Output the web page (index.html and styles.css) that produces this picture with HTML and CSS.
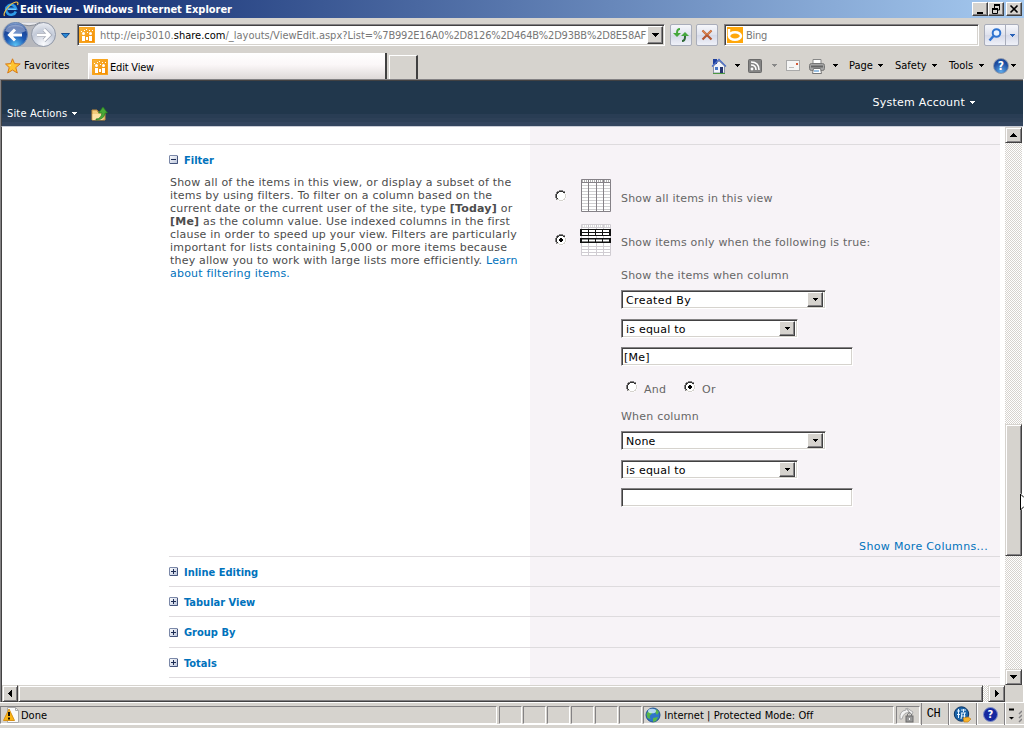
FILE: index.html
```html
<!DOCTYPE html>
<html lang="en">
<head>
<meta charset="utf-8">
<title>Edit View - Windows Internet Explorer</title>
<link rel="stylesheet" href="styles.css">
</head>
<body>
<svg width="0" height="0" class="defs">
  <defs>
    <linearGradient id="orange" x1="0" y1="0" x2="1" y2="1"><stop offset="0" stop-color="#f9b73a"/><stop offset="1" stop-color="#f48a00"/></linearGradient>
    <radialGradient id="blueball" cx=".5" cy=".95" r=".95"><stop offset="0" stop-color="#59c5f5"/><stop offset=".45" stop-color="#1c58b4"/><stop offset=".8" stop-color="#1d4292"/><stop offset="1" stop-color="#9ab4dc"/></radialGradient>
    <radialGradient id="greyball" cx=".5" cy=".9" r=".9"><stop offset="0" stop-color="#fafbfe"/><stop offset=".6" stop-color="#c3cad8"/><stop offset="1" stop-color="#eceef3"/></radialGradient>
    <linearGradient id="box" x1="0" y1="0" x2="1" y2="1"><stop offset="0" stop-color="#fff"/><stop offset="1" stop-color="#b9c3da"/></linearGradient>
    <symbol id="site" viewBox="0 0 16 16">
      <rect width="16" height="16" rx="1" fill="url(#orange)"/>
      <path d="M.5.5h15v15H.5z" fill="none" stroke="#f8a51e"/>
      <g fill="#fff"><circle cx="4.500" cy="6.500" r="1.500"/><circle cx="11.500" cy="6.500" r="1.500"/><path d="M3 9h3v5H3zM10 9h3v5h-3zM7 10h2v3H7zM7 2h1v1H7zM10 3h1v1h-1zM5 3h1v1H5zM13 3h1v1h-1zM8 5h1v1H8zM2 4h1v1H2z"/></g>
    </symbol>
    <symbol id="plus" viewBox="0 0 9 9"><rect x=".5" y=".5" width="8" height="8" rx=".5" fill="url(#box)" stroke="#7b88a8"/><path d="M8.500 1v7.500H1" fill="none" stroke="#44547c"/><path d="M2 4.500h5M4.500 2v5" stroke="#1c2c54"/></symbol>
    <symbol id="minus" viewBox="0 0 9 9"><rect x=".5" y=".5" width="8" height="8" rx=".5" fill="url(#box)" stroke="#7b88a8"/><path d="M8.500 1v7.500H1" fill="none" stroke="#44547c"/><path d="M2 4.500h5" stroke="#1c2c54"/></symbol>
    <symbol id="down" viewBox="0 0 7 4"><path d="M0 0h7v1H6v1H5v1H4v1H3V3H2V2H1V1H0z" fill="currentColor"/></symbol>
    <symbol id="down5" viewBox="0 0 5 3"><path d="M0 0h5v1H4v1H3v1H2V2H1V1H0z" fill="currentColor"/></symbol>
    <symbol id="radio" viewBox="0 0 12 12"><circle cx="6" cy="6" r="5.500" fill="#fff"/><path d="M4 0h4v1H4zM2 1h2v1H2zM8 1h2v1H8zM1 2h1v2H1zM0 4h1v4H0zM1 8h1v2H1z" fill="#848284"/><path d="M4 1h4v1H4zM2 2h2v1H2zM8 2h2v1H8zM2 3h1v1H2zM1 4h1v4H1zM2 8h1v1H2z" fill="#303030"/><path d="M9 3h1v1H9zM10 4h1v4h-1zM9 8h1v1H9zM8 9h2v1H8zM4 10h4v1H4zM2 9h2v1H2z" fill="#d6d3ce"/></symbol>
    <symbol id="radio-on" viewBox="0 0 12 12"><use href="#radio" width="12" height="12"/><path d="M5 4h2v1h1v2H7v1H5V7H4V5h1z" fill="#000"/></symbol>
  </defs>
</svg>

<div class="window">
  <header class="titlebar">
    <svg class="ie" width="16" height="16" viewBox="0 0 16 16"><path d="M12.800 10.500A5 5 0 1 1 13 7.800H5" fill="none" stroke="#2e9be8" stroke-width="2.600"/><path d="M4.500 8.300h8.500" stroke="#8fd4fb"/><path d="M1.500 15C-.5 12 7 2 13 1c2-.2 2.300 1 1.500 3" fill="none" stroke="#f4c33f" stroke-width="1.200"/></svg>
    <span class="caption">Edit View - Windows Internet Explorer</span>
    <div class="winbtns">
      <span class="wb"><svg width="12" height="10"><path d="M3 9h6" stroke="#000" stroke-width="2"/></svg></span>
      <span class="wb"><svg width="12" height="10"><path d="M4.500 4V1M9.500 1v5H8" fill="none" stroke="#000"/><path d="M4 1h6" stroke="#000" stroke-width="2"/><path d="M2.500 5v4.500h5V5" fill="none" stroke="#000"/><path d="M2 5h6" stroke="#000" stroke-width="2"/></svg></span>
      <span class="wb close"><svg width="12" height="10"><path d="M2.500 1.500l7 7M9.500 1.500l-7 7" stroke="#000" stroke-width="1.600"/></svg></span>
    </div>
  </header>

  <div class="navbar">
    <svg class="backfwd" width="72" height="32" viewBox="0 0 72 32">
      <rect x="2" y="4" width="53" height="25" rx="12.500" fill="#b7b8bd"/>
      <path d="M18 4.500Q29 11 40 4.500" fill="#e8e8ec" stroke="#888d96"/>
      <circle cx="15.500" cy="16.500" r="12" fill="url(#blueball)" stroke="#6685b4"/>
      <path d="M5 13a11 9 0 0 1 21 0q-10 5-21 0z" fill="#fff" opacity=".38"/>
      <path d="M22 17H10M15 11.500L9.500 17l5.500 5.500" fill="none" stroke="#fff" stroke-width="3"/>
      <circle cx="43.500" cy="16.500" r="12" fill="url(#greyball)" stroke="#9198a6"/>
      <path d="M37 17h12M44 11.500l5.500 5.500-5.500 5.500" fill="none" stroke="#a4a9b5" stroke-width="4"/>
      <path d="M37 17h12M44 11.500l5.500 5.500-5.500 5.500" fill="none" stroke="#fff" stroke-width="2.500"/>
      <path d="M61.500 15.500h8L65.500 20z" fill="#2a8ad6" stroke="#174e91"/>
    </svg>
    <div class="field address">
      <svg width="16" height="16"><use href="#site"/></svg>
      <span class="url">http://eip3010.<b>share.com</b>/_layouts/ViewEdit.aspx?List=<span class="guid">%7B992E16A0%2D8126%2D464B%2D93BB%2D8E58AF</span></span>
      <span class="drop"><svg width="7" height="4"><use href="#down"/></svg></span>
    </div>
    <span class="soft refresh"><svg width="16" height="14" viewBox="0 0 16 14"><path d="M7 1Q4 1 4 5v2" fill="none" stroke="#45a83d" stroke-width="2"/><path d="M0 5h8L4 9z" fill="#45a83d"/><path d="M9 13q3 0 3-4V7" fill="none" stroke="#2f6936" stroke-width="2"/><path d="M8 8h8l-4-4z" fill="#45a83d"/></svg></span>
    <span class="soft stop"><svg width="12" height="12"><path d="M1.500 1.500l9 9M10.500 1.500l-9 9" stroke="#b4552f" stroke-width="2.200"/><path d="M1.500 1.500l4 4M10.500 1.500l-4 4" stroke="#dc8a54" stroke-width="1.500"/></svg></span>
    <div class="field search">
      <svg width="16" height="16"><rect width="16" height="16" fill="#ffa70a"/><path d="M2 2v7" stroke="#fff" stroke-width="2.500"/><ellipse cx="8" cy="9" rx="6" ry="3.700" fill="none" stroke="#fff" stroke-width="2.500"/></svg>
      <span>Bing</span>
    </div>
    <div class="soft go">
      <svg width="14" height="14"><circle cx="8.500" cy="5" r="3.800" fill="#e9f3ff" stroke="#2f74d0" stroke-width="2"/><path d="M5.500 8l-4 4.500" stroke="#2f74d0" stroke-width="2.500"/></svg>
      <span class="godrop"><svg width="5" height="3"><use href="#down5"/></svg></span>
    </div>
  </div>

  <div class="tabbar">
    <div class="favs">
      <svg width="16" height="16" viewBox="0 0 16 16"><path d="M7.500.8l2 4.800 5.700.3-4.400 3.700 1.500 5.400-4.800-3L2.700 15l1.500-5.400L.5 6l5.200-.4z" fill="#ffc52e" stroke="#d77a18"/><path d="M7.300 3l-1 3.500-3.500.4 3 1z" fill="#fff0a0"/></svg>
      <span>Favorites</span>
    </div>
    <div class="tab"><svg width="16" height="16"><use href="#site"/></svg><span>Edit View</span></div>
    <div class="newtab"></div>
    <nav class="commands">
      <svg width="16" height="16" viewBox="0 0 16 16" class="c-home"><path d="M2.500 8v7h11V8L8 3z" fill="#f2f4fa" stroke="#8b94a6"/><path d="M2 1h4v5H2z" fill="#1e3f9c"/><path d="M1 8.500L8 1.500l7 7" fill="none" stroke="#4a6bc4" stroke-width="1.300"/><path d="M2 15.500h12" stroke="#4d9a42"/><path d="M9 9h3v6H9z" fill="#27356e"/><path d="M4 9h3v3H4z" fill="#4877c7"/></svg>
      <svg width="5" height="3" class="a-home"><use href="#down5"/></svg>
      <svg width="14" height="14" class="c-feed"><rect x=".5" y=".5" width="13" height="13" rx="1" fill="#858585" stroke="#6a6a6a"/><path d="M3 6q5 0 5 5M3 3q8 0 8 8" fill="none" stroke="#fff" stroke-width="1.600"/><circle cx="4" cy="10" r="1.400" fill="#fff"/></svg>
      <svg width="5" height="3" class="a-feed"><use href="#down5"/></svg>
      <svg width="14" height="11" class="c-mail"><rect x=".5" y=".5" width="13" height="10" fill="#f5f5f5" stroke="#a9a9a9"/><path d="M10 3h2v2h-2z" fill="#d45a39"/><path d="M3 7.500h5" stroke="#bbb"/></svg>
      <svg width="16" height="16" viewBox="0 0 16 16" class="c-print"><path d="M4 1.500h8V7H4z" fill="#fff" stroke="#878787"/><rect x=".5" y="5.500" width="15" height="7" rx="2" fill="#a5a5a5" stroke="#777"/><path d="M2 8.500h12" stroke="#666" stroke-width="2"/><path d="M4.500 10.500h7l1 5h-9z" fill="#fff" stroke="#777"/><path d="M5 13h5" stroke="#3984c9"/></svg>
      <svg width="5" height="3" class="a-print"><use href="#down5"/></svg>
      <span class="cmd page-cmd">Page</span><svg width="5" height="3"><use href="#down5"/></svg>
      <span class="cmd safety">Safety</span><svg width="5" height="3"><use href="#down5"/></svg>
      <span class="cmd tools">Tools</span><svg width="5" height="3"><use href="#down5"/></svg>
      <span class="help">?</span><svg width="5" height="3" class="a-help"><use href="#down5"/></svg>
    </nav>
  </div>

  <div class="client">
    <div class="ribbon">
      <div class="siteactions"><span>Site Actions</span><svg width="5" height="3"><use href="#down5"/></svg>
        <svg class="upfolder" width="17" height="16" viewBox="0 0 17 16"><path d="M1 4h5l1 2h7v8H1z" fill="#f3cb7c" stroke="#c48e3c"/><path d="M1.500 8h11l-1 6h-10z" fill="#ffe2a4"/><path d="M5 13q5 0 6-6H7.500L12 1l4.500 6H14q-1 7-9 7z" fill="#49a936" stroke="#267a22" stroke-width=".7"/></svg>
      </div>
      <div class="account"><span>System Account</span><svg width="5" height="3"><use href="#down5"/></svg></div>
    </div>

    <div class="viewport">
      <main class="page">
        <div class="row lead"><div></div><div class="pane"></div></div>
        <section class="row filter">
          <div class="desc">
            <h3><svg width="9" height="9"><use href="#minus"/></svg><span>Filter</span></h3>
            <p>Show all of the items in this view, or display a subset of the<br>items by using filters. To filter on a column based on the<br>current date or the current user of the site, type <b>[Today]</b> or<br><b>[Me]</b> as the column value. Use indexed columns in the first<br>clause in order to speed up your view. Filters are particularly<br>important for lists containing 5,000 or more items because<br>they allow you to work with large lists more efficiently. <a>Learn<br>about filtering items.</a></p>
          </div>
          <div class="pane form">
            <div class="choice all">
              <svg class="rd" width="12" height="12"><use href="#radio"/></svg>
              <svg class="grid" width="32" height="34" viewBox="0 0 32 34"><path d="M1.500.5h29v32h-29z" fill="#fff"/><path d="M2 6.500h28M2 9.500h28M2 12.500h28M2 15.500h28M2 18.500h28M2 21.500h28M2 24.500h28M2 27.500h28M2 30.500h28" stroke="#d0d0d2"/><path d="M2 2h28" stroke="#b5b5b5" stroke-width="2" stroke-dasharray="1 1"/><path d="M1.500.5h29v32h-29zM1.500 3.500h29M8.500 1v32M16.500 1v32M23.500 1v32" fill="none" stroke="#858187"/></svg>
              <span>Show all items in this view</span>
            </div>
            <div class="choice only">
              <svg class="rd" width="12" height="12"><use href="#radio-on"/></svg>
              <svg class="grid second" width="32" height="34" viewBox="0 0 32 34"><path d="M1.500.5h29v31h-29z" fill="#fff"/><path d="M1.500 3.500h29M1.500 22.500h29M1.500 25.500h29M1.500 28.500h29M8.500 1v31M16.500 1v31M23.500 1v31M1.500.5h29v31h-29z" fill="none" stroke="#d0ccd2"/><path d="M2 2h28" stroke="#bbb" stroke-dasharray="1 1"/><path d="M0 5h31v7H0zM0 14h31v5H0z" fill="#111"/><path d="M2 6h6v2H2zM9 6h6v2H9zM16 6h6v2h-6zM23 6h6v2h-6zM2 9h6v2H2zM9 9h6v2H9zM16 9h6v2h-6zM23 9h6v2h-6zM2 15.500h6v2H2zM9 15.500h6v2H9zM16 15.500h6v2h-6zM23 15.500h6v2h-6z" fill="#fff"/></svg>
              <span>Show items only when the following is true:</span>
            </div>
            <div class="conditions">
              <label class="l1">Show the items when column</label>
              <div class="select wide"><span class="who">Created By</span><i><svg width="5" height="3"><use href="#down5"/></svg></i></div>
              <div class="select narrow"><span>is equal to</span><i><svg width="5" height="3"><use href="#down5"/></svg></i></div>
              <div class="input">[Me]</div>
              <div class="andor">
                <svg width="12" height="12"><use href="#radio"/></svg><span>And</span>
                <svg class="or" width="12" height="12"><use href="#radio-on"/></svg><span>Or</span>
              </div>
              <label class="l2">When column</label>
              <div class="select wide"><span>None</span><i><svg width="5" height="3"><use href="#down5"/></svg></i></div>
              <div class="select narrow"><span>is equal to</span><i><svg width="5" height="3"><use href="#down5"/></svg></i></div>
              <div class="input"></div>
            </div>
            <a class="more">Show More Columns...</a>
          </div>
        </section>
        <section class="row s30"><div><h3><svg width="9" height="9"><use href="#plus"/></svg><span>Inline Editing</span></h3></div><div class="pane"></div></section>
        <section class="row s30"><div><h3><svg width="9" height="9"><use href="#plus"/></svg><span>Tabular View</span></h3></div><div class="pane"></div></section>
        <section class="row s31"><div><h3><svg width="9" height="9"><use href="#plus"/></svg><span>Group By</span></h3></div><div class="pane"></div></section>
        <section class="row s30"><div><h3><svg width="9" height="9"><use href="#plus"/></svg><span>Totals</span></h3></div><div class="pane"></div></section>
        <section class="row rest"><div></div><div class="pane"></div></section>
      </main>
      <div class="vscroll">
        <span class="sb"><svg width="7" height="4" class="flip"><use href="#down"/></svg></span>
        <span class="track1"></span><span class="thumb"></span><span class="track2"></span>
        <span class="sb"><svg width="7" height="4"><use href="#down"/></svg></span>
      </div>
    </div>
    <div class="hscroll">
      <span class="sb first"><svg width="4" height="7"><path d="M4 0v7H3V6H2V5H1V4H0V3h1V2h1V1h1V0z"/></svg></span>
      <span class="thumb"></span><span class="track"></span>
      <span class="sb"><svg width="4" height="7"><path d="M0 0v7h1V6h1V5h1V4h1V3H3V2H2V1H1V0z"/></svg></span>
    </div>
  </div>

  <footer class="status">
    <div class="cell done"><svg width="16" height="16" viewBox="0 0 16 16"><path d="M4.500.5h8l3 3v12h-11z" fill="#fafafa" stroke="#aaa"/><path d="M12.500.5v3h3" fill="none" stroke="#aaa"/><path d="M6 2l5.500 11.500H.5z" fill="#fbb514" stroke="#d99215"/><path d="M6 5v4M6 10.500v2" stroke="#000" stroke-width="1.800"/></svg><span>Done</span></div>
    <div class="cell sm"></div><div class="cell sm"></div><div class="cell sm"></div><div class="cell sm"></div><div class="cell sm"></div><div class="cell sm"></div>
    <div class="cell zone"><svg width="16" height="16" viewBox="0 0 16 16"><circle cx="8" cy="8" r="7" fill="#2f74c9" stroke="#23558f"/><path d="M1.500 7q2-4 4-3l2 2-3 3 1 3-3-1zM8 11l5-1-2 4-3 1zM11 2l3 3-2 3-2-3z" fill="#58b848"/><ellipse cx="7" cy="4" rx="4" ry="2.300" fill="#d6eefc" opacity=".8"/></svg><span>Internet | Protected Mode: Off</span></div>
    <div class="cell lock"><svg width="17" height="16" viewBox="0 0 17 16"><path d="M2 12Q1 4 8 3V1l4 5q-6-2-8 6zM9 1l6 4-2 5z" fill="#f4f4f4" stroke="#aaa"/><rect x="8" y="9" width="7" height="6" fill="#999" stroke="#6d6d6d"/><path d="M9.500 9V7q2-3 4 0v2" fill="none" stroke="#777"/><path d="M11.500 11v2" stroke="#fff"/></svg></div>
    <div class="lang">
      <span class="ch">CH</span>
      <span class="ime"><svg width="18" height="17" viewBox="0 0 18 17"><circle cx="8.500" cy="8" r="7.200" fill="#1b64a8" stroke="#0b3261"/><path d="M4 5h3M5.500 3v9M4 8.500h3M8 4h5M10.500 3v3M8 7h5M9 7l-1 6M11.500 7v6M8.500 10h4" stroke="#e7f4ff" fill="none"/><path d="M10 12l5-1 3 2-3 3h-4z" fill="#f6b32d" stroke="#bc7511" stroke-width=".6"/></svg></span>
      <span class="ime2"><b>?</b></span>
      <span class="opts"><svg width="16" height="17"><path d="M3 3.500h5" stroke="#000" stroke-width="2"/><path d="M3 11h5L5.500 13.500z" fill="#000"/><path d="M13 16l3-3M13 12l3-3M13 8l3-3" stroke="#848284" stroke-width="1.500"/></svg></span>
    </div>
  </footer>

  <svg class="pointer" width="4" height="18"><path d="M.5 0v17.500L4 14V3.500z" fill="#fff"/><path d="M.5 1v16M1 1.500l3 3M1 16.500l3-3" stroke="#000" fill="none"/></svg>
</div>
</body>
</html>
```

FILE: styles.css
```css
* { box-sizing: border-box; }
body { margin: 0; background: #fff; overflow: hidden; font: 11px/13px "DejaVu Sans Condensed", "DejaVu Sans", sans-serif; color: #000; }
svg { display: block; flex: none; }
span, label, a, p { white-space: nowrap; }
.defs { position: absolute; }

.window { position: relative; width: 1024px; height: 728px; overflow: hidden; background: #d6d3ce; display: flex; flex-direction: column; }

/* Title bar */
.titlebar { height: 18px; flex: none; display: flex; align-items: center; padding: 0 2px 0 3px; background: linear-gradient(90deg, #0a246a, #a6caf0); }
.caption { margin-left: 1px; font-weight: bold; color: #fff; flex: 1; letter-spacing: -.02px; }
.winbtns { display: flex; }
.wb { width: 16px; height: 14px; padding: 1px; background: #d6d3ce; border: 1px solid; border-color: #fff #404040 #404040 #fff; box-shadow: inset -1px -1px #848284; }
.wb.close { margin-left: 2px; }

/* Address row */
.navbar { height: 34px; flex: none; display: flex; align-items: flex-start; }
.backfwd { margin-right: 5px; }
.field { height: 22px; margin-top: 6px; display: flex; align-items: center; background: #fff; border: 1px solid; border-color: #848284 #fff #fff #848284; box-shadow: inset 1px 1px #424142, inset -1px -1px #d6d3ce; color: #777; }
.address { width: 588px; padding: 0 1px; }
.url { margin-left: 5px; flex: 1; }
.url b { font-weight: normal; color: #000; }
.guid { letter-spacing: -.2px; }
.drop { width: 16px; height: 18px; display: flex; align-items: center; justify-content: center; background: #d6d3ce; border: 1px solid; border-color: #fff #404040 #404040 #fff; color: #000; box-shadow: inset -1px -1px #848284; }
.soft { height: 22px; width: 22px; margin-top: 6px; display: flex; align-items: center; justify-content: center; border: 1px solid #a9adba; border-radius: 2px; background: linear-gradient(#f6f7fb, #dfe2ed 50%, #d5d9e8 51%, #eff1f8); }
.refresh { margin-left: 5px; }
.stop { margin-left: 4px; }
.search { margin-left: 6px; width: 255px; padding-left: 2px; }
.search span { margin-left: 3px; letter-spacing: -.3px; }
.go { width: 35px; margin-left: 5px; justify-content: flex-start; padding-left: 3px; }
.godrop { margin-left: 3px; height: 20px; flex: 1; border-left: 1px solid #a9adba; display: flex; align-items: center; justify-content: center; color: #2a62b8; }

/* Tabs and command bar */
.tabbar { height: 27px; flex: none; display: flex; }
.favs { width: 88px; display: flex; align-items: center; padding-left: 5px; }
.favs span { margin-left: 3px; letter-spacing: .1px; }
.tab { width: 299px; margin-top: 1px; display: flex; align-items: center; padding: 1px 0 0 3px; background: linear-gradient(#fff, #fbf7f8 45%, #ded9d8); border-left: 1px solid #fff; border-right: 2px solid #404040; }
.tab span { margin: 1px 0 0 2px; letter-spacing: -.2px; }
.newtab { width: 29px; margin: 3px 0 0 2px; border: 1px solid #fff; border-bottom: 0; border-right: 2px solid #404040; }
.commands { flex: 1; display: flex; align-items: center; padding-left: 293px; }
.a-home { margin-left: 8px; }
.c-feed { margin-left: 8px; }
.a-feed { margin-left: 10px; color: #888; }
.c-mail { margin-left: 9px; }
.c-print { margin-left: 9px; }
.a-print { margin-left: 8px; }
.cmd { margin-right: 4px; }
.page-cmd { margin-left: 11px; width: 25px; }
.safety { margin-left: 12px; width: 33px; }
.tools { margin-left: 12px; width: 26px; }
.help { margin-left: 9px; width: 16px; height: 16px; border-radius: 50%; border: 1px solid #8e98aa; background: radial-gradient(circle at 50% 90%, #5da9ea, #1b4a9e 65%); color: #fff; font-weight: bold; line-height: 14px; text-align: center; font-size: 12px; }
.a-help { margin-left: 2px; }

/* Page header */
.client { height: 623px; flex: none; border-top: 1px solid #848284; border-left: 1px solid #848284; width: 1023px; box-shadow: 1px 0 #fff; position: relative; display: flex; flex-direction: column; }
.ribbon { height: 47px; flex: none; border-top: 1px solid #424142; border-left: 1px solid #424142; border-bottom: 1px solid #c8ccd6; background: linear-gradient(#21374c 0 33px, #293d54 33px 37px, #2d4057 37px 41px, #33455e 41px); color: #fff; display: flex; justify-content: space-between; }
.siteactions { display: flex; align-items: center; height: 20px; margin-top: 22px; padding-left: 5px; letter-spacing: .17px; }
.siteactions > svg { margin-left: 5px; }
.siteactions > .upfolder { margin: 2px 0 0 14px; }
.account { display: flex; align-items: center; height: 16px; margin: 13px 48px 0 0; gap: 5px; font-family: "DejaVu Sans", sans-serif; letter-spacing: .25px; }

/* Scrolled document */
.viewport { height: 558px; flex: none; display: flex; background: #fff; border-left: 1px solid #424142; overflow: hidden; }
.page { width: 1003px; height: 558px; padding-left: 167px; overflow: hidden; font-family: "DejaVu Sans", sans-serif; letter-spacing: .21px; }
.row { display: grid; grid-template-columns: 361px 470px; border-top: 1px solid #dedbde; width: 831px; }
.pane { background: #f7f3f7; }
.lead { height: 17px; border-top: 0; }
.filter { height: 412px; }
.s30 { height: 30px; }
.s31 { height: 31px; }
.rest { height: 10px; }
h3 { margin: 0; display: flex; align-items: center; height: 29px; font: bold 11px/13px "DejaVu Sans Condensed", sans-serif; letter-spacing: 0; color: #0072bc; gap: 6px; }
h3 span { padding-top: 1px; }
.s31 h3 { height: 30px; }
p { margin: 2px 0 0 1px; color: #4c4c4c; }
a { color: #0072bc; }
.form { padding: 31px 12px 0 25px; color: #666; display: flex; flex-direction: column; }
.choice { display: flex; align-items: center; height: 44px; }
.rd { margin-top: -4px; }
.grid { margin: -4px 9px 0 13px; }
.grid.second { margin-top: -2px; }
.conditions { padding-left: 66px; display: flex; flex-direction: column; align-items: flex-start; }
.conditions label { height: 13px; margin: 5px 0 8px; }
.select, .input { height: 19px; background: #fff; border: 1px solid; border-color: #848284 #fff #fff #848284; box-shadow: inset 1px 1px #424142, inset -1px -1px #d6d3ce; color: #000; }
.select { display: flex; justify-content: space-between; align-items: center; padding: 1px 2px 1px 4px; margin-bottom: 10px; }
.select span { padding-top: 1px; }
.select i { width: 16px; height: 15px; background: #d6d3ce; border: 1px solid; border-color: #fff #404040 #404040 #fff; box-shadow: inset -1px -1px #848284; display: flex; align-items: center; justify-content: center; }
.who { letter-spacing: .4px; }
.wide { width: 205px; }
.narrow { width: 177px; margin-bottom: 9px; }
.input { width: 232px; padding: 3px 2px; }
.andor { display: flex; align-items: center; height: 13px; margin: 16px 0 10px 5px; }
.andor svg { margin-top: -4px; }
.andor span { margin: 1px 0 0 6px; }
.andor .or { margin-left: 18px; }
.more { align-self: flex-end; margin-top: 33px; letter-spacing: .33px; }

/* Scroll bars */
.vscroll, .hscroll { display: flex; background: repeating-conic-gradient(#fff 0 25%, #d6d3ce 0 50%) 0 0 / 2px 2px; }
.vscroll { width: 17px; flex-direction: column; }
.sb { flex: none; width: 17px; height: 16px; display: flex; align-items: center; justify-content: center; }
.sb.first { width: 16px; }
.sb, .thumb { background: #d6d3ce; border: 1px solid; border-color: #d6d3ce #424142 #424142 #d6d3ce; box-shadow: inset 1px 1px #fff, inset -1px -1px #848284; }
.flip { transform: scaleY(-1); }
.track1 { height: 281px; }
.vscroll .thumb { height: 132px; }
.track2 { flex: 1; }
.hscroll { height: 17px; flex: none; border-left: 1px solid #424142; border-right: 17px solid #d6d3ce; width: 1021px; }
.hscroll .sb { height: 17px; }
.hscroll .thumb { width: 965px; }
.hscroll .track { flex: 1; }

/* Status bar */
.status { flex: none; height: 26px; display: flex; border-top: 1px solid #fff; padding-top: 3px; background: linear-gradient(#d6d3ce 0 21px, #fff 21px 22px, #d6d3ce 22px); }
.cell { height: 18px; margin-right: 1px; border: 1px solid; border-color: #848284 #fff #fff #848284; display: flex; align-items: center; }
.done { width: 498px; padding-left: 2px; }
.done span { margin-left: 2px; }
.sm { width: 23px; position: relative; left: 1px; }
.zone { width: 251px; margin-left: 1px; padding-left: 1px; }
.zone span { margin-left: 3px; letter-spacing: .05px; }
.lock { width: 24px; margin-left: 1px; padding-left: 1px; }
.lang { display: flex; height: 22px; margin-top: -3px; border-left: 1px solid #848284; }
.lang > span { display: flex; align-items: center; justify-content: center; border-right: 1px solid #848284; box-shadow: 1px 0 #fff; }
.ch { width: 27px; padding-right: 3px; font: 12px "Liberation Mono", monospace; letter-spacing: -.5px; }
.ime { width: 28px; }
.ime2 { width: 28px; }
.ime2 b { width: 15px; height: 15px; border-radius: 50%; border: 1px solid #8090c8; background: #1529a0; color: #fff; font-size: 11px; line-height: 14px; text-align: center; }
.lang > .opts { width: 19px; border: 0; box-shadow: none; }

/* Mouse pointer, partly off the right edge */
.pointer { position: absolute; right: 0; top: 493px; }
```
